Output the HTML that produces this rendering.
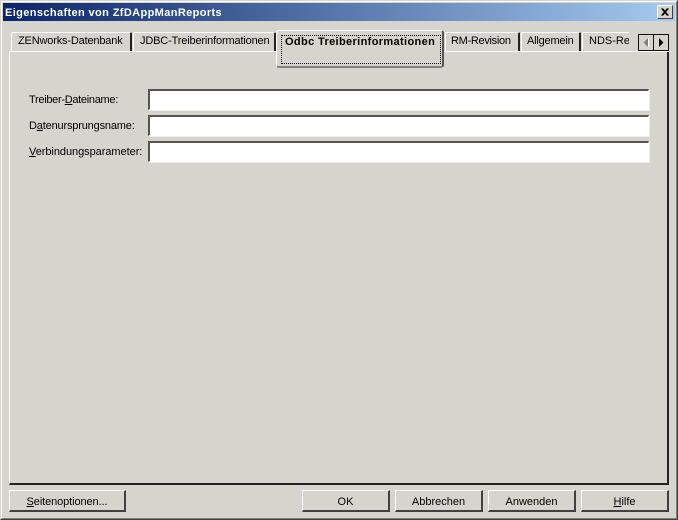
<!DOCTYPE html>
<html><head><meta charset="utf-8">
<style>
html,body{margin:0;padding:0;width:678px;height:520px;overflow:hidden;background:#d6d5cd}
body{position:relative;font:11px "Liberation Sans",sans-serif;color:#000}
div,span.t{position:absolute;box-sizing:border-box;white-space:nowrap}
.t{line-height:13px}
u{text-decoration:underline}
.tab{background:#d6d5cd;border-top:1px solid #fff;border-left:1px solid #fff;border-right:2px solid #222;border-radius:2px 2px 0 0;height:19px;top:32px}
.btn{background:#d6d5cd;border-top:1px solid #fff;border-left:1px solid #fff;border-right:2px solid #404040;border-bottom:2px solid #404040;height:22px;top:490px;text-align:center;line-height:22px}
.inp{left:148px;width:501px;height:21px;background:#fff;border-top:2px solid #555;border-left:2px solid #555;border-right:1px solid #fff;border-bottom:1px solid #fff;outline:0;box-shadow:1px 1px 0 #eeece8}
</style></head><body>
<div style="left:0;top:0;width:678px;height:520px;border-top:1px solid #d6d5cd;border-left:1px solid #d6d5cd;border-right:1px solid #404040;border-bottom:1px solid #404040"></div>
<div style="left:1px;top:1px;width:676px;height:518px;border-top:1px solid #fff;border-left:1px solid #fff;border-right:1px solid #808080;border-bottom:1px solid #808080"></div>
<div style="left:3px;top:3px;width:672px;height:18px;background:linear-gradient(90deg,#0a246a,#a6caf0)"></div>
<div class="t" style="left:5px;top:6px;color:#fff;font-weight:bold;font-size:11px;line-height:14px;letter-spacing:.38px">Eigenschaften von ZfDAppManReports</div>
<div style="left:657px;top:5px;width:16px;height:14px;background:#d6d5cd;border-top:1px solid #fff;border-left:1px solid #fff;border-right:1px solid #404040;border-bottom:1px solid #404040">
<svg width="14" height="12" style="position:absolute;left:0;top:0"><path d="M3.500 2.500l6 7M4.500 2.500l6 7M9.500 2.500l-6 7M10.500 2.500l-6 7" stroke="#000" fill="none"/></svg></div>

<div style="left:9px;top:51px;width:660px;height:434px;background:#d6d5cd;border-top:1px solid #fff;border-left:1px solid #fff;border-right:2px solid #222;border-bottom:2px solid #222"></div>

<div class="tab" style="left:11px;width:121px"></div>
<div class="t" style="left:18px;top:35px;letter-spacing:-.17px">ZENworks-Datenbank</div>
<div class="tab" style="left:133px;width:143px"></div>
<div class="t" style="left:140px;top:35px;letter-spacing:-.16px">JDBC-Treiberinformationen</div>
<div class="tab" style="left:445px;width:75px"></div>
<div class="t" style="left:451px;top:35px;letter-spacing:-.3px">RM-Revision</div>
<div class="tab" style="left:521px;width:60px"></div>
<div class="t" style="left:527px;top:35px;letter-spacing:-.2px">Allgemein</div>
<div class="tab" style="left:582px;width:48px;border-right:0"></div>
<div class="t" style="left:589px;top:35px;width:40px;overflow:hidden">NDS-Rechte</div>
<div style="left:629px;top:32px;width:9px;height:19px;background:#d6d5cd"></div>
<div style="left:9px;top:51px;width:660px;height:1px;background:#fff;z-index:0"></div>

<div style="left:276px;top:30px;width:168px;height:38px;background:#d6d5cd;border:1px solid #fff;border-right:2px solid #555;border-bottom:2px solid #808080;border-radius:3px"></div>
<div style="left:281px;top:35px;width:160px;height:29px;border:1px dotted #000"></div>
<div class="t" style="left:285px;top:36px;font-weight:bold;letter-spacing:.36px">Odbc Treiberinformationen</div>

<div style="left:638px;top:34px;width:16px;height:17px;background:#d6d5cd;border:1px solid #111;border-top:1px solid #111"><svg width="14" height="15" style="position:absolute;left:0;top:0"><path d="M9 3v9L4.500 7.500z" fill="#808080"/><path d="M9.500 3v9" stroke="#fff"/></svg></div>
<div style="left:653px;top:34px;width:16px;height:17px;background:#d6d5cd;border:1px solid #111"><svg width="14" height="15" style="position:absolute;left:0;top:0"><path d="M5 3v9L9.500 7.500z" fill="#000"/></svg></div>

<div class="t" style="left:29px;top:94px;letter-spacing:-.3px">Treiber-<u>D</u>ateiname:</div>
<div class="t" style="left:29px;top:120px;letter-spacing:-.17px">D<u>a</u>tenursprungsname:</div>
<div class="t" style="left:29px;top:146px;letter-spacing:-.05px"><u>V</u>erbindungsparameter:</div>
<div class="inp" style="top:89px"></div>
<div class="inp" style="top:115px"></div>
<div class="inp" style="top:141px"></div>

<div class="btn" style="left:9px;width:117px;letter-spacing:-.1px"><u>S</u>eitenoptionen...</div>
<div class="btn" style="left:302px;width:88px">OK</div>
<div class="btn" style="left:395px;width:88px">Abbrechen</div>
<div class="btn" style="left:488px;width:88px">Anwenden</div>
<div class="btn" style="left:581px;width:88px"><u>H</u>ilfe</div>
</body></html>
